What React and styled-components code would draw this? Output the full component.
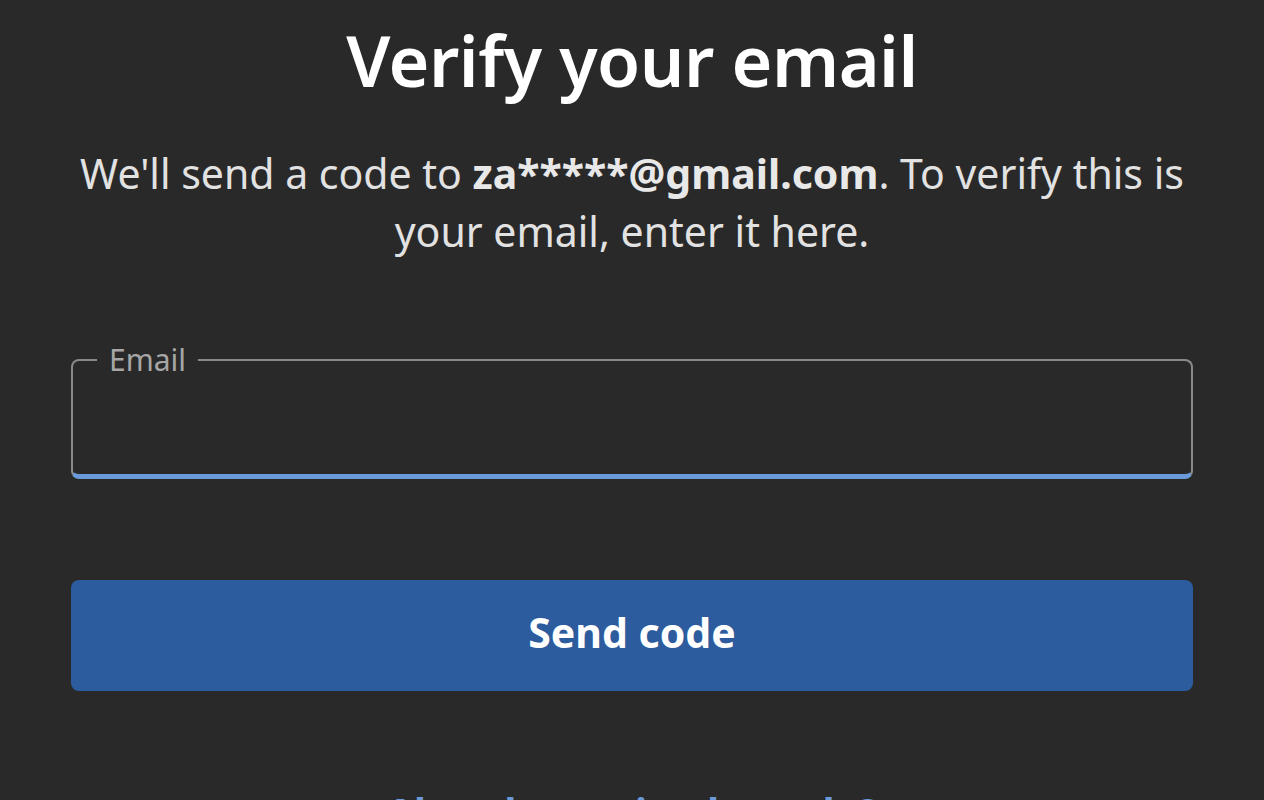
import React from "react";
import styled, { createGlobalStyle } from "styled-components";

const Global = createGlobalStyle`
  html, body { margin: 0; padding: 0; background: #292929; }
  body { font-family: "Noto Sans", "Open Sans", sans-serif; }
  * { box-sizing: border-box; }
`;

const Page = styled.main`
  width: 1264px;
  height: 800px;
  overflow: hidden;
  background: #292929;
  display: flex;
  flex-direction: column;
  align-items: center;
  padding: 14px 71px 0;
  & > * { flex-shrink: 0; }
`;

const Title = styled.h1`
  margin: 0;
  font-size: 70px;
  font-weight: 600;
  color: #ffffff;
  line-height: 92px;
  letter-spacing: -0.5px;
  text-align: center;
`;

const Lead = styled.p`
  margin: 38px 0 0;
  font-size: 41px;
  line-height: 58px;
  color: #e2e2e2;
  text-align: center;
  strong { font-weight: 700; color: #e8e8e8; }
`;

const Field = styled.fieldset`
  align-self: stretch;
  margin: 82px 0 0;
  padding: 0 24px;
  border: 2px solid #8a8a8a;
  border-bottom: 5px solid #6a9ad9;
  border-radius: 8px;
`;

const Legend = styled.legend`
  padding: 0 12px;
  font-size: 30px;
  line-height: 36px;
  color: #a6a6a6;
`;

const Input = styled.input`
  display: block;
  width: 100%;
  height: 96px;
  background: transparent;
  border: none;
  outline: none;
  color: #fff;
  font: inherit;
  font-size: 34px;
`;

const Button = styled.button`
  align-self: stretch;
  margin-top: 101px;
  height: 111px;
  border: none;
  border-radius: 8px;
  background: #2d5c9e;
  color: #ffffff;
  font-family: inherit;
  font-size: 41px;
  font-weight: 700;
  padding: 0 0 7px;
`;

const Link = styled.a`
  margin-top: 96px;
  font-size: 40px;
  font-weight: 700;
  color: #6a9ad9;
  text-decoration: none;
  line-height: 50px;
`;

export default function App() {
  return (
    <>
      <Global />
      <Page>
        <Title>Verify your email</Title>
        <Lead>
          We'll send a code to <strong>za*****@gmail.com</strong>. To verify this is your email, enter it here.
        </Lead>
        <Field>
          <Legend>Email</Legend>
          <Input type="email" aria-label="Email" />
        </Field>
        <Button>Send code</Button>
        <Link href="#">Already received a code?</Link>
      </Page>
    </>
  );
}
